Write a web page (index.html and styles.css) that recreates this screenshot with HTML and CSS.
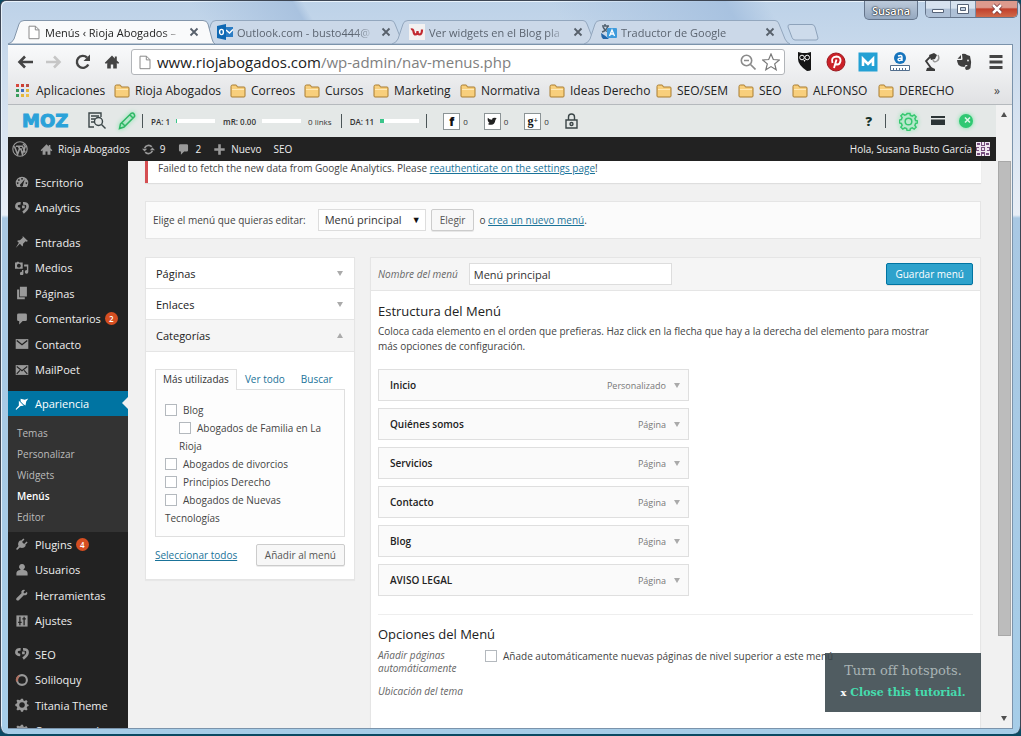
FILE: index.html
```
<!DOCTYPE html>
<html lang="es">
<head>
    <meta charset="UTF-8">
    <meta name="viewport" content="width=device-width, initial-scale=1.0">
    <title>Menús ‹ Rioja Abogados</title>
    <link rel="stylesheet" href="styles.css">
</head>
<body>
    <!-- shared icons -->
    <svg class="sprite" aria-hidden="true">
        <symbol id="doc" viewBox="0 0 12 14"><path d="M1 .7h6.5L11 4.2v9H1zM7.3.7v3.7H11" fill="#fff" stroke="#8a8a8a"/></symbol>
        <symbol id="folder" viewBox="0 0 16 14"><path d="M1 12V2.5Q1 1 2.500 1h3.500Q7 1 7.300 3H14q1 0 1 1v8q0 1-1 1H2q-1 0-1-1z" fill="#f8cf7c" stroke="#a97d31"/><path d="M2 5.500h12" stroke="#fde9b8"/></symbol>
        <symbol id="tab-on" viewBox="0 0 207 24"><path d="M0 24Q4 23 6 19L11 4Q12 .5 16 .5H195Q199 .5 200 4L204 19Q205 23 207 24z" fill="#f9fafb" stroke="#8396ab"/></symbol>
        <symbol id="tab-off" viewBox="0 0 207 24"><path d="M0 24Q4 23 6 19L11 4Q12 .5 16 .5H191Q194 .5 195 4L201 19Q203 23 206 24z" fill="#cbd8e8" stroke="#93a7be"/></symbol>
        <symbol id="home" viewBox="0 0 20 20"><path d="M10 2L1 11l1.500 1.500L4 11v7h4.500v-5h3v5H16v-7l1.500 1.500L19 11l-3-3V3h-2.500v2.500z"/></symbol>
        <symbol id="bubble" viewBox="0 0 20 20"><path d="M5 2h10q2 0 2 2v7q0 2-2 2h-4l-5 5v-5H5q-2 0-2-2V4q0-2 2-2z"/></symbol>
        <symbol id="dash" viewBox="0 0 20 20"><path fill-rule="evenodd" d="M3 17Q1 14.500 1 11.500a9 9 0 0 1 18 0q0 3-2 5.500zM10 4.200a1.200 1.200 0 1 0 .1 0zM5.500 6a1.200 1.200 0 1 0 .1 0zM3.800 10.500a1.200 1.200 0 1 0 .1 0zM16.200 10.500a1.200 1.200 0 1 0 .1 0zM14 6l-5.500 6.500a2.200 2.200 0 1 0 3 1.500z"/></symbol>
        <symbol id="yoast" viewBox="0 0 20 20"><path d="M7.500 11.500Q2 11 2 7.500 2 3 8 3.500M11.500 3.500Q18 3 18 7.500 18 12 11.500 16.500M12 6.500v4" fill="none" stroke="#999" stroke-width="3.800"/></symbol>
        <symbol id="pin" viewBox="0 0 20 20"><path d="M11 1.500l7.500 7-2 1-1.500-.5-3.500 3.500q.5 2.500-1 4L7 12.500l-6 6 4.500-7.500L3 8.500q1.500-1.500 4-1L11 4z"/></symbol>
        <symbol id="media" viewBox="0 0 20 20"><path fill-rule="evenodd" d="M2 2l1-1h2l1 1h5v9H0V2zM5.500 4a2.700 2.700 0 1 0 .1 0zM13 5h6v10.500a2.500 2.500 0 1 1-2-2.400V8h-4zM12 13v5.500a2.500 2.500 0 1 1-2-3V13z"/></symbol>
        <symbol id="pages" viewBox="0 0 20 20"><path d="M7 1h10v14H7zM3 5h3v11h8v3H3z"/></symbol>
        <symbol id="mail" viewBox="0 0 20 20"><path d="M1 3h18v14H1z"/><path d="M2.500 5l7.500 6 7.500-6" fill="none" stroke="#222" stroke-width="2"/></symbol>
        <symbol id="mail-open" viewBox="0 0 20 20"><path d="M1 3h18v14H1z"/><path d="M2.500 5l7.500 6 7.500-6M2.500 15.500L7 10.500M17.500 15.500L13 10.500" fill="none" stroke="#222" stroke-width="1.600"/></symbol>
        <symbol id="brush" viewBox="0 0 20 20"><path d="M8 2.500l6 1.500L19 2l-3 4.500-1 5.500-3-1.500-4-4zM5.500 5.500l7 7-4.500.5L1.500 18.500 1 17l4.500-5z"/></symbol>
        <symbol id="plug" viewBox="0 0 20 20"><path d="M12 2l1.500 1.500L10 7l3 3 3.500-3.500L18 8l-3.500 3.500 1 1Q12 17 7 15L3 18.500 1.500 17 5 13Q3 8 7.500 4.500l1 1z"/></symbol>
        <symbol id="user" viewBox="0 0 20 20"><path d="M10 1.500a4 4 0 0 1 2.500 7.300l-.5 1.200q6 .5 6 4.500V18H2v-3.500Q2 10.500 8 10l-.5-1.200A4 4 0 0 1 10 1.500z"/></symbol>
        <symbol id="wrench" viewBox="0 0 20 20"><path d="M17 5.500l-3 2.500-2-2 2.500-3Q10.500 1.500 9 5l.3 2.500L2 14.500q-1 2 .5 3t3 0l7-7.300 2.500.3q4-1.500 2-5z"/></symbol>
        <symbol id="sliders" viewBox="0 0 20 20"><path d="M2 2h16v16H2z"/><path d="M7 4v12M13 4v12M4.500 12h5M10.500 7h5" stroke="#222" stroke-width="1.800"/></symbol>
        <symbol id="gear" viewBox="0 0 20 20"><path fill-rule="evenodd" d="M8.500 1h3l.5 2.500 1.800.8L16 3l2 2-1.300 2.200.8 1.800 2 .5v2l-2 .8-.8 1.800L18 16l-2 2-2.200-1.300-1.800.8-.5 2h-3L8 17.500l-1.800-.8L4 18l-2-2 1.300-2.200L2.500 12 .5 11.500v-3L2.500 8l.8-1.800L2 4l2-2 2.200 1.300L8 2.500zM10 6a4 4 0 1 0 .1 0z"/></symbol>
        <symbol id="x" viewBox="0 0 10 10"><path d="M1.500 1.500l7 7M8.500 1.500l-7 7" fill="none" stroke="#57606b" stroke-width="1.800"/></symbol>
    </svg>

    <div class="window">
        <header class="tabstrip">
            <nav class="tabs">
                <a class="tab active" href="#">
                    <svg class="tab-shape"><use href="#tab-on"/></svg>
                    <svg class="favicon doc"><use href="#doc"/></svg>
                    <span class="tab-title">Menús ‹ Rioja Abogados –</span>
                    <svg class="tab-close"><use href="#x"/></svg>
                </a>
                <a class="tab" href="#">
                    <svg class="tab-shape"><use href="#tab-off"/></svg>
                    <svg class="favicon" viewBox="0 0 16 16"><path d="M7 3h9v10H7z" fill="#2b7cc4"/><path d="M9 6l3.500 3L16 5.500" stroke="#fff" fill="none" stroke-width="1.500"/><path d="M0 2l9-2v16l-9-2z" fill="#0f68b3"/><ellipse cx="4.500" cy="8" rx="1.900" ry="2.600" fill="none" stroke="#fff" stroke-width="1.400"/></svg>
                    <span class="tab-title">Outlook.com - busto444@</span>
                    <svg class="tab-close"><use href="#x"/></svg>
                </a>
                <a class="tab" href="#">
                    <svg class="tab-shape"><use href="#tab-off"/></svg>
                    <svg class="favicon" viewBox="0 0 16 16"><path d="M0 0h16v16H0z" fill="#f3f1f1"/><path d="M2 5.500Q4 4.500 4.500 7.500t2 3Q8.500 10.500 8.500 7q0 3.500 2 3.500 2.500 0 2.500-5" fill="none" stroke="#c2282f" stroke-width="2.200"/></svg>
                    <span class="tab-title">Ver widgets en el Blog pla</span>
                    <svg class="tab-close"><use href="#x"/></svg>
                </a>
                <a class="tab" href="#">
                    <svg class="tab-shape"><use href="#tab-off"/></svg>
                    <svg class="favicon" viewBox="0 0 16 16"><path d="M1 2h7M4 0v2M7 2Q5 7 1 8M2 3q2 4 6 5" fill="none" stroke="#51606e" stroke-width="1.500"/><path d="M0 9q5 3 8 6H2q-2-2-2-6z" fill="#2465a8"/><rect x="6" y="4" width="10" height="10" rx="1" fill="#3e9bdc"/><path d="M8.500 12L11 6l2.500 6M9.500 10h3" fill="none" stroke="#fff" stroke-width="1.300"/></svg>
                    <span class="tab-title">Traductor de Google</span>
                    <svg class="tab-close"><use href="#x"/></svg>
                </a>
            </nav>
            <button class="new-tab" aria-label="Nueva pestaña"><svg viewBox="0 0 32 17"><path d="M3 .5h22q2 0 3 2.500l3 11q0 2-2 2H8q-2 0-3-2.500L1 3Q.5.5 3 .5z" fill="#cddbeb" stroke="#8ea3bb"/></svg></button>
            <div class="win-controls">
                <button class="win-user">Susana</button>
                <div class="win-group">
                    <button class="win-min" aria-label="Minimizar"><svg viewBox="0 0 12 12"><path d="M.5 6.500h11v3H.5z" fill="#fff" stroke="#566378"/></svg></button>
                    <button class="win-max" aria-label="Maximizar"><svg viewBox="0 0 12 12"><path d="M.5 1.500h11v9H.5z" fill="#fff" stroke="#566378"/><path d="M3.500 4.500h5v3h-5z" fill="#c4d1e2" stroke="#566378"/></svg></button>
                    <button class="win-close" aria-label="Cerrar"><svg viewBox="0 0 12 12"><path d="M2 2l8 8M10 2l-8 8" stroke="#743033" stroke-width="4"/><path d="M2 2l8 8M10 2l-8 8" stroke="#fff" stroke-width="2.500"/></svg></button>
                </div>
            </div>
        </header>

        <div class="browser">
            <div class="toolbar">
                <button aria-label="Atrás"><svg viewBox="0 0 16 16"><path d="M8 2.500L2.500 8 8 13.500M3 8h13" fill="none" stroke="#444" stroke-width="2.600"/></svg></button>
                <button aria-label="Adelante"><svg viewBox="0 0 16 16"><path d="M8 2.500L13.500 8 8 13.500M13 8H0" fill="none" stroke="#c6c6c6" stroke-width="2.600"/></svg></button>
                <button aria-label="Recargar"><svg viewBox="0 0 16 16"><path d="M13.300 10.500a6 6 0 1 1-1.300-7" fill="none" stroke="#444" stroke-width="2.400"/><path d="M15 .5V7H8.500z" fill="#444"/></svg></button>
                <button aria-label="Inicio"><svg viewBox="0 0 20 20" fill="#444"><use href="#home"/></svg></button>
                <div class="omnibox">
                    <svg class="doc"><use href="#doc"/></svg>
                    <a class="url" href="#">www.riojabogados.com<span>/wp-admin/nav-menus.php</span></a>
                    <svg class="omni-icon" viewBox="0 0 16 16" fill="none" stroke="#8b8b8b" stroke-width="1.600"><circle cx="6.500" cy="6.500" r="5.200"/><path d="M4 6.500h5M10.500 10.500l5 5"/></svg>
                    <svg class="omni-icon star" viewBox="0 0 18 18"><path d="M9 1l2.300 5.500 6 .5-4.600 3.900 1.500 5.900L9 13.600l-5.200 3.200 1.500-5.900L.7 7l6-.5z" fill="none" stroke="#777" stroke-width="1.200"/></svg>
                </div>
                <div class="extensions">
                    <button aria-label="Hootsuite"><svg viewBox="0 0 20 20"><path d="M4 0l4 1h5l4-1v18q-1 1-4 1-9-6-9-12z" fill="#151515"/><circle cx="8" cy="5.500" r="2.300" fill="none" stroke="#fff"/><circle cx="13.200" cy="5.500" r="2.300" fill="none" stroke="#fff"/><path d="M9.500 8h2l-1 2z" fill="#fff"/></svg></button>
                    <button aria-label="Pinterest"><svg viewBox="0 0 20 20"><circle cx="10" cy="10" r="9" fill="#cb2027" stroke="#9b1a20"/><path d="M6.500 11q-2-6 4-6.500 4.500.3 4 4.500-.8 3.500-3 3.500-1.500 0-2-1M10.500 7.500L8 16" fill="none" stroke="#fff" stroke-width="1.900"/></svg></button>
                    <button aria-label="MozBar"><svg viewBox="0 0 20 20"><path d="M.5.500h19v19H.500z" fill="#23a0d4"/><path d="M5 14V7l5 5 5-5v7" fill="none" stroke="#fff" stroke-width="2.600"/></svg></button>
                    <button aria-label="Alexa"><svg viewBox="0 0 20 20"><circle cx="10" cy="6" r="6" fill="#1674bd"/><path d="M8 4q4-1.500 4 1v4M12 6.300q-4-.5-4 1.500 1.500 2 4-.5" fill="none" stroke="#fff" stroke-width="1.400"/><path d="M.5 13.500h19v5H.500z" fill="#fff" stroke="#526e8d"/><path d="M3.500 16v3M6.500 16v3M9.500 16v3M12.500 16v3M15.500 16v3" stroke="#526e8d"/></svg></button>
                    <button aria-label="Lámpara"><svg viewBox="0 0 20 20"><path d="M7 3l5-2 3 2-2 4-4 1zM4 19l1-3 4-1 4 2v2z" fill="#3b3b3b"/><path d="M9 4L4 9l5 7" fill="none" stroke="#3b3b3b" stroke-width="1.800"/><path d="M11 8q1 3 4 1t1-6" fill="none" stroke="#999" stroke-width="1.500"/></svg></button>
                    <button aria-label="Evernote"><svg viewBox="0 0 20 20"><path d="M8 2q3-1 5 1l3 1q2 6 .5 12-1 2-4 2-2-1-1-3.500l2-.5q0-1.500-2-1l-1 2q-4 0-6-2Q3 10 3 8h4.500q1 0 1-1zM7 3L3.500 6.700H7z" fill="#3e3e3e"/><circle cx="14" cy="8.500" r="1" fill="#ddd"/></svg></button>
                    <button aria-label="Menú"><svg viewBox="0 0 20 20"><path d="M3.500 4.500h13M3.500 10h13M3.500 15.500h13" stroke="#444" stroke-width="2.800"/></svg></button>
                </div>
            </div>

            <nav class="bookmarks">
                <a href="#"><svg class="apps" viewBox="0 0 14 14"><path d="M0 0h3v3H0z" fill="#d8473c"/><path d="M5 0h3v3H5z" fill="#cf3d32"/><path d="M10 0h3v3h-3z" fill="#b94f46"/><path d="M0 5h3v3H0z" fill="#35955a"/><path d="M5 5h3v3H5z" fill="#4070c0"/><path d="M10 5h3v3h-3z" fill="#e4b73a"/><path d="M0 10h3v3H0z" fill="#3a9e5d"/><path d="M5 10h3v3H5z" fill="#e4b73a"/><path d="M10 10h3v3h-3z" fill="#edc049"/></svg>Aplicaciones</a>
                <a href="#"><svg><use href="#folder"/></svg>Rioja Abogados</a>
                <a href="#"><svg><use href="#folder"/></svg>Correos</a>
                <a href="#"><svg><use href="#folder"/></svg>Cursos</a>
                <a href="#"><svg><use href="#folder"/></svg>Marketing</a>
                <a href="#"><svg><use href="#folder"/></svg>Normativa</a>
                <a href="#"><svg><use href="#folder"/></svg>Ideas Derecho</a>
                <a href="#"><svg><use href="#folder"/></svg>SEO/SEM</a>
                <a href="#"><svg><use href="#folder"/></svg>SEO</a>
                <a href="#"><svg><use href="#folder"/></svg>ALFONSO</a>
                <a href="#"><svg><use href="#folder"/></svg>DERECHO</a>
                <button class="more">»</button>
            </nav>

            <div class="viewport">
                <div class="page">
                    <div class="mozbar">
                        <a class="moz-logo" href="#">MOZ</a>
                        <svg class="moz-analyze" viewBox="0 0 18 18" fill="none" stroke="#3b4648" stroke-width="1.400"><path d="M6 15H1V1h12v4M3 4h8M3 7h4M3 10h3"/><circle cx="10.500" cy="9.500" r="4"/><path d="M13.500 12.500l4 4"/></svg>
                        <svg class="moz-pencil" viewBox="0 0 18 18" fill="none" stroke="#2fb765" stroke-width="1.500"><path d="M1.500 16.500l1-4.500L13 1.500q2-1 3 .5t.5 2.500L6 15zM4 11l3 3M12 3l3 3"/></svg>
                        <i class="bar"></i>
                        <div class="metric"><b>PA: 1</b><meter min="0" max="100" value="1"></meter></div>
                        <div class="metric"><b>mR: 0.00</b><meter min="0" max="10" value="0"></meter></div>
                        <span class="links">0 links</span>
                        <i class="bar"></i>
                        <div class="metric"><b>DA: 11</b><meter min="0" max="100" value="11"></meter></div>
                        <i class="bar"></i>
                        <div class="social">
                            <span class="count"><b class="box">f</b>0</span>
                            <span class="count"><b class="box"><svg viewBox="0 0 12 12"><path d="M1 2q2 2.500 5 2.500Q6 2 8.500 2L11.500 2.500 10 5q-.5 5-5 5.500Q2.500 10.500 1 9.500L3 8.500Q0 6 1 2z" fill="#222"/></svg></b>0</span>
                            <span class="count"><b class="box serif">g<sup>+</sup></b>0</span>
                            <svg class="lock" viewBox="0 0 13 16" fill="none" stroke="#3b4648" stroke-width="1.400"><path d="M1 7h11v8H1zM3.500 7V4q0-3 3-3t3 3v3"/><circle cx="6.500" cy="11" r="1.500"/></svg>
                        </div>
                        <div class="moz-tools">
                            <b>?</b>
                            <i class="bar"></i>
                            <svg class="glow" viewBox="0 0 20 20"><g fill="none" stroke="#37c871" stroke-width="1.600"><path d="M8.500 1.500h3l.5 2 2 .8L16 3l2 2-1.300 2 .8 2 2 .5v2l-2 .5-.8 2L18 16l-2 2-2-1.300-2 .8-.5 2h-3L8 17.500l-2-.8L4 18l-2-2 1.300-2-.8-2-2-.5v-3l2-.5.8-2L2 4l2-2 2 1.300 2-.8z"/><circle cx="10" cy="10" r="3.500"/></g></svg>
                            <svg class="cards" viewBox="0 0 14 10"><path d="M0 0h14v2H0zM0 3.500h14V9H0z" fill="#2c3436"/></svg>
                            <svg class="glow small" viewBox="0 0 16 16"><circle cx="8" cy="8" r="7" fill="#2fc872"/><path d="M7 4.500l5 5M12 4.500l-5 5" stroke="#dff7e8" stroke-width="1.600"/></svg>
                        </div>
                    </div>

                    <nav class="adminbar">
                        <a class="ab-logo" href="#"><svg viewBox="0 0 20 20"><circle cx="10" cy="10" r="9" fill="none" stroke="#999" stroke-width="1.400"/><path d="M3 6.500l4 10 2.500-7L8 6.500h5l3.500 8M5 6.500h3M11 9l2 7.500L16.500 7q-1-3-3-3" fill="none" stroke="#999" stroke-width="2"/></svg></a>
                        <a class="ab-site" href="#"><svg><use href="#home"/></svg>Rioja Abogados</a>
                        <a href="#"><svg viewBox="0 0 20 20"><path d="M4 8a6.500 6.500 0 0 1 11-2M16 12a6.500 6.500 0 0 1-11 2" fill="none" stroke="#999" stroke-width="2.600"/><path d="M0 9h8L4 13zM12 11h8l-4-4z"/></svg>9</a>
                        <a href="#"><svg><use href="#bubble"/></svg>2</a>
                        <a href="#"><svg viewBox="0 0 20 20"><path d="M8 2h4v6h6v4h-6v6H8v-6H2V8h6z"/></svg>Nuevo</a>
                        <a href="#">SEO</a>
                        <a class="ab-user" href="#">Hola, Susana Busto García
                            <svg class="avatar" viewBox="0 0 14 14"><path d="M0 0h14v14H0z" fill="#efe6f0"/><path d="M1 1h3v2H1zM10 1h3v2h-3zM1 11h3v2H1zM10 11h3v2h-3zM5 0h1v3h2V0h1v4H5zM5 10h4v4H8v-2H6v2H5zM0 5h3v1H1v2h2v1H0zM14 5h-3v1h2v2h-2v1h3zM5 5h4v4H5z" fill="#77507f"/><path d="M6 6h2v2H6z" fill="#efe6f0"/></svg>
                        </a>
                    </nav>

                    <div class="admin">
                        <nav class="sidebar">
                            <ul>
                                <li><a href="#"><svg><use href="#dash"/></svg>Escritorio</a></li>
                                <li><a href="#"><svg><use href="#yoast"/></svg>Analytics</a></li>
                            </ul>
                            <ul>
                                <li><a href="#"><svg><use href="#pin"/></svg>Entradas</a></li>
                                <li><a href="#"><svg><use href="#media"/></svg>Medios</a></li>
                                <li><a href="#"><svg><use href="#pages"/></svg>Páginas</a></li>
                                <li><a href="#"><svg><use href="#bubble"/></svg>Comentarios <span class="badge">2</span></a></li>
                                <li><a href="#"><svg><use href="#mail"/></svg>Contacto</a></li>
                                <li><a href="#"><svg><use href="#mail-open"/></svg>MailPoet</a></li>
                            </ul>
                            <a class="current" href="#"><svg><use href="#brush"/></svg>Apariencia</a>
                            <div class="submenu">
                                <a href="#">Temas</a>
                                <a href="#">Personalizar</a>
                                <a href="#">Widgets</a>
                                <a class="here" href="#">Menús</a>
                                <a href="#">Editor</a>
                            </div>
                            <ul>
                                <li><a href="#"><svg><use href="#plug"/></svg>Plugins <span class="badge">4</span></a></li>
                                <li><a href="#"><svg><use href="#user"/></svg>Usuarios</a></li>
                                <li><a href="#"><svg><use href="#wrench"/></svg>Herramientas</a></li>
                                <li><a href="#"><svg><use href="#sliders"/></svg>Ajustes</a></li>
                            </ul>
                            <ul>
                                <li><a href="#"><svg><use href="#yoast"/></svg>SEO</a></li>
                                <li><a href="#"><svg viewBox="0 0 20 20"><circle cx="10" cy="10" r="7" fill="none" stroke="#999" stroke-width="3"/><path d="M3 12a7 7 0 0 1 3-8" fill="none" stroke="#b0705f" stroke-width="3"/></svg>Soliloquy</a></li>
                                <li><a href="#"><svg><use href="#gear"/></svg>Titania Theme</a></li>
                                <li><a href="#"><svg><use href="#gear"/></svg>Cerrar menú</a></li>
                            </ul>
                        </nav>

                        <main class="content">
                            <p class="notice">Failed to fetch the new data from Google Analytics. Please <a href="#">reauthenticate on the settings page</a>!</p>

                            <form class="manage">
                                <label for="menuSelect">Elige el menú que quieras editar:</label>
                                <span class="select">
                                    <select id="menuSelect"><option>Menú principal</option></select>
                                </span>
                                <button type="button" class="button">Elegir</button>
                                <span>o <a href="#">crea un nuevo menú</a>.</span>
                            </form>

                            <div class="columns">
                                <section class="accordion">
                                    <h3>Páginas <i class="down"></i></h3>
                                    <h3>Enlaces <i class="down"></i></h3>
                                    <h3 class="open">Categorías <i class="up"></i></h3>
                                    <div class="panel">
                                        <div class="panel-tabs">
                                            <a class="on" href="#">Más utilizadas</a>
                                            <a href="#">Ver todo</a>
                                            <a href="#">Buscar</a>
                                        </div>
                                        <div class="checklist">
                                            <label><input type="checkbox">Blog</label>
                                            <label class="child"><input type="checkbox">Abogados de Familia en La Rioja</label>
                                            <label><input type="checkbox">Abogados de divorcios</label>
                                            <label><input type="checkbox">Principios Derecho</label>
                                            <label><input type="checkbox">Abogados de Nuevas Tecnologías</label>
                                        </div>
                                        <div class="panel-actions">
                                            <a href="#">Seleccionar todos</a>
                                            <button class="button">Añadir al menú</button>
                                        </div>
                                    </div>
                                </section>

                                <section class="editor">
                                    <div class="editor-head">
                                        <label for="menuName">Nombre del menú</label>
                                        <input type="text" id="menuName" value="Menú principal">
                                        <button class="button primary">Guardar menú</button>
                                    </div>
                                    <div class="editor-body">
                                        <h2>Estructura del Menú</h2>
                                        <p>Coloca cada elemento en el orden que prefieras. Haz click en la flecha que hay a la derecha del elemento para mostrar<br>más opciones de configuración.</p>
                                        <ul class="items">
                                            <li><b>Inicio</b><span>Personalizado</span><i class="down"></i></li>
                                            <li><b>Quiénes somos</b><span>Página</span><i class="down"></i></li>
                                            <li><b>Servicios</b><span>Página</span><i class="down"></i></li>
                                            <li><b>Contacto</b><span>Página</span><i class="down"></i></li>
                                            <li><b>Blog</b><span>Página</span><i class="down"></i></li>
                                            <li><b>AVISO LEGAL</b><span>Página</span><i class="down"></i></li>
                                        </ul>
                                        <div class="options">
                                            <h2>Opciones del Menú</h2>
                                            <dl>
                                                <dt>Añadir páginas automáticamente</dt>
                                                <dd><label><input type="checkbox">Añade automáticamente nuevas páginas de nivel superior a este menú</label></dd>
                                                <dt>Ubicación del tema</dt>
                                                <dd></dd>
                                            </dl>
                                        </div>
                                    </div>
                                </section>
                            </div>
                        </main>
                    </div>

                    <aside class="hotspots">
                        <p>Turn off hotspots.</p>
                        <a href="#"><span>x</span> Close this tutorial.</a>
                    </aside>
                </div>
                <div class="scrollbar"><i class="up"></i><div class="track"><div class="thumb"></div></div><i class="down"></i></div>
            </div>
        </div>
    </div>
</body>
</html>
```

FILE: styles.css
```
* { box-sizing: border-box; }
html, body { height: 100%; }
body { margin: 0; overflow: hidden; background: #0b4a63; font: 10px/15px "Open Sans", "Noto Sans", sans-serif; color: #444; }
button { font: inherit; color: inherit; border: 0; padding: 0; background: none; }
h2, h3, p, ul, dl, dd { margin: 0; padding: 0; }
ul { list-style: none; }
svg { display: block; flex: none; }
a { color: #1a7399; }
.sprite { position: absolute; width: 0; height: 0; }
i.up, i.down { flex: none; border: 3px solid transparent; }
i.down { border-top: 5px solid #aaa; border-bottom: 0; }
i.up { border-bottom: 5px solid #aaa; border-top: 0; }

/* window frame */
.window { height: calc(100% - 2px); display: flex; flex-direction: column; padding: 0 7px 5px 7px; border: 1px solid #3d4654; border-bottom: 0; border-radius: 6px 6px 8px 8px; background: linear-gradient(to bottom, #bdd2e8 0, #d3e0ef 100px, #e8eef6 214px, #a9c8e3 217px, #a6cde8 100%); box-shadow: inset 1px 1px #e8f2fb; }
.tabstrip { height: 43px; display: flex; align-items: flex-end; position: relative; background: linear-gradient(60deg, transparent 20%, #a9c2df 30%, transparent 31%, transparent 55%, #a8c2e0 72%, transparent 76%); }
.tabs { display: flex; }
.tab { position: relative; width: 207px; height: 24px; margin-right: -15px; padding: 0 15px 0 17px; display: flex; align-items: center; color: #5b6470; font-size: 11px; text-decoration: none; }
.tab.active { z-index: 1; color: #222; }
.tab-shape { position: absolute; left: 0; top: 0; width: 100%; height: 100%; }
.favicon { position: relative; width: 16px; height: 16px; margin-right: 4px; }
.tab-title { position: relative; flex: 1; overflow: hidden; white-space: nowrap; -webkit-mask-image: linear-gradient(to right, #000 85%, transparent); mask-image: linear-gradient(to right, #000 85%, transparent); }
.tab-close { position: relative; width: 10px; height: 10px; margin: 0 1px 0 6px; }
.new-tab { width: 32px; height: 17px; margin: 0 0 3px 11px; }
.new-tab svg { width: 32px; height: 17px; }
.win-controls { position: absolute; top: 0; right: -5px; display: flex; align-items: flex-start; gap: 7px; }
.win-user { width: 54px; height: 19px; border: 1px solid #65758b; border-top: 0; border-radius: 0 0 5px 5px; background: linear-gradient(#bccadb, #95a8c0); color: #fff; font-size: 11px; font-weight: 600; text-shadow: 0 0 2px #000, 0 0 1px #000; }
.win-group { display: flex; border: 1px solid #65758b; border-top: 0; border-radius: 0 0 5px 5px; overflow: hidden; }
.win-group button { width: 25px; height: 16px; display: flex; align-items: center; justify-content: center; background: linear-gradient(#d7e2ef 45%, #aec0d6 50%); border-right: 1px solid #7b8ca3; }
.win-group svg { width: 12px; height: 12px; }
.win-group .win-close { width: 41px; border: 0; background: linear-gradient(#dd9a8d 40%, #c1402c 50%, #d06a4a); }

/* browser chrome */
.browser { flex: 1; min-height: 0; display: flex; flex-direction: column; border: 1px solid #7b93ab; border-left: 0; background: linear-gradient(#f9fafb, #e0e1e3 60px); }
.toolbar { flex: none; height: 34px; display: flex; align-items: center; padding-left: 9px; }
.toolbar button { width: 16px; margin-right: 13px; }
.toolbar button svg { width: 16px; height: 16px; }
.omnibox { flex: 1; height: 26px; margin-left: -2px; display: flex; align-items: center; gap: 6px; padding: 0 4px 0 7px; border: 1px solid #b2b5b9; border-radius: 3px; background: #fff; }
.doc { width: 12px; height: 15px; }
.tab .doc { margin: 0 5px 0 3px; }
.url { flex: 1; font-size: 15px; line-height: 22px; color: #222; text-decoration: none; }
.url span { color: #808080; }
.omni-icon { width: 16px; height: 16px; }
.star { width: 18px; height: 18px; }
.toolbar .extensions { display: flex; gap: 12px; margin: 0 6px 0 9px; }
.toolbar .extensions button { width: 20px; margin: 0; }
.toolbar .extensions svg { width: 20px; height: 20px; }
.bookmarks { flex: none; height: 26px; display: grid; grid-template-columns: 99px 116px 74px 69px 87px 89px 107px 82px 54px 86px 1fr auto; align-items: center; padding: 0 12px 2px 7px; font-size: 12px; border-bottom: 1px solid #b5b9bd; }
.bookmarks a { display: flex; align-items: center; gap: 5px; color: #222; text-decoration: none; white-space: nowrap; }
.bookmarks svg { width: 16px; height: 14px; }
.viewport { flex: 1; min-height: 0; display: flex; }
.page { flex: 1; min-width: 0; display: flex; flex-direction: column; position: relative; background: #f1f1f1; overflow: hidden; }
.scrollbar { flex: none; width: 16px; display: flex; flex-direction: column; align-items: center; padding: 7px 0; background: #f1f1f1; }
.scrollbar .up { border-bottom-color: #505050; }
.scrollbar .down { border-top-color: #505050; }
.track { flex: 1; width: 100%; padding: 44px 1px 80px 2px; }
.thumb { height: 100%; background: #bcbcbc; border: 1px solid #a8a8a8; }

/* moz toolbar */
.mozbar { flex: none; height: 32px; display: flex; align-items: center; padding: 0 22px 0 14px; background: #e4e8e7; font-size: 8px; color: #333; white-space: nowrap; }
.moz-logo { width: 66px; font: bold 18px/20px "DejaVu Sans", sans-serif; -webkit-text-stroke: 1px #2ba2d9; color: #2ba2d9; text-decoration: none; }
.moz-analyze { width: 18px; height: 18px; }
.moz-pencil { width: 18px; height: 18px; margin: 0 6px 0 12px; filter: drop-shadow(0 0 2px #5fe596); }
.bar { width: 1px; height: 14px; background: #4b5557; }
.metric { display: flex; align-items: center; gap: 6px; margin: 0 0 0 8px; }
.metric b { font-weight: 600; }
meter { width: 39px; height: 4px; appearance: none; background: #fff; border: 0; }
meter::-webkit-meter-bar { height: 4px; background: #fff; border: 0; border-radius: 0; }
meter::-webkit-meter-optimum-value { background: #3ac58a; }
.links { margin: 0 9px 0 7px; }
.metric + .bar { margin-left: 7px; }
.social { display: flex; align-items: center; margin-left: 16px; gap: 16px; }
.count { display: flex; align-items: center; gap: 3px; }
.box { width: 17px; height: 17px; display: flex; align-items: center; justify-content: center; border: 1px solid #8c9496; background: #fff; font-size: 12px; font-weight: 800; color: #111; }
.box svg { width: 10px; height: 10px; }
.serif { font-family: "Liberation Serif", serif; font-weight: 700; }
.serif sup { font-size: 8px; line-height: 8px; }
.lock { width: 13px; height: 16px; }
.moz-tools { margin-left: auto; display: flex; align-items: center; gap: 13px; }
.moz-tools b { font-size: 13px; font-weight: 800; color: #17332b; }
.glow { width: 19px; height: 19px; filter: drop-shadow(0 0 2px #6be79d); }
.glow.small { width: 16px; height: 16px; }
.cards { width: 14px; height: 10px; }

/* admin bar */
.adminbar { flex: none; height: 24px; display: flex; align-items: center; gap: 12px; padding: 0 6px 0 4px; background: #222; font-size: 10px; fill: #999; }
.adminbar a { display: flex; align-items: center; gap: 5px; color: #eee; text-decoration: none; white-space: nowrap; }
.adminbar svg { width: 13px; height: 13px; }
.adminbar .ab-logo svg { width: 16px; height: 16px; }
.adminbar .ab-user { margin-left: auto; gap: 4px; }
.adminbar .avatar { width: 14px; height: 14px; }

/* sidebar */
.admin { flex: 1; min-height: 0; display: flex; }
.sidebar { flex: none; width: 120px; padding-top: 9px; background: #222; fill: #999; font-size: 11px; }
.sidebar ul { display: grid; grid-auto-rows: 26px 25px; }
.sidebar ul + ul { margin-top: 8px; }
.sidebar ul:first-child + ul { margin-top: 9px; }
.sidebar a { height: 100%; display: flex; align-items: center; padding-left: 7px; color: #eee; text-decoration: none; white-space: nowrap; }
.sidebar li a { padding-bottom: 2px; }
.sidebar svg { width: 14px; height: 14px; margin-right: 6px; }
.badge { min-width: 13px; height: 13px; margin-left: 4px; border-radius: 7px; background: #d54e21; color: #fff; font-size: 8px; font-weight: 600; line-height: 13px; text-align: center; }
.sidebar .current { position: relative; height: 25px; margin-top: 8px; background: #0074a2; color: #fff; fill: #fff; }
.current::after { content: ""; position: absolute; right: 0; top: 6px; border: 6px solid transparent; border-right-color: #f1f1f1; border-left: 0; }
.submenu { padding: 7px 0 4px; background: #333; font-size: 10px; }
.sidebar .submenu a { height: 21px; padding-left: 9px; color: #bbb; }
.sidebar .submenu .here { color: #fff; font-weight: 600; }

/* content */
.content { flex: 1; min-width: 0; padding: 0 15px 0 17px; }
.notice { padding: 0 10px 7px; border-left: 3px solid #d54e52; background: #fff; box-shadow: 0 1px 1px rgba(0,0,0,.08); }
.manage { display: flex; align-items: center; gap: 5px; margin-top: 18px; padding: 7px; height: 38px; border: 1px solid #e5e5e5; background: #fbfbfb; }
.manage label { margin-right: 7px; }
.select { position: relative; }
.select::after { content: "▼"; position: absolute; right: 5px; top: 3px; font-size: 9px; color: #111; pointer-events: none; }
select { display: block; width: 108px; height: 22px; appearance: none; padding: 0 6px; border: 1px solid #ddd; border-radius: 0; background: #fff; font: 11px/20px "Open Sans", sans-serif; color: #333; }
.button { height: 22px; padding: 0 8px; border: 1px solid #ccc; border-radius: 2px; background: #f7f7f7; color: #555; box-shadow: 0 1px 0 rgba(0,0,0,.08); }
.button.primary { background: #2ea2cc; border-color: #0074a2; color: #fff; }
.columns { display: grid; grid-template-columns: 210px 1fr; align-items: start; gap: 15px; margin-top: 18px; }
.accordion, .editor { border: 1px solid #e5e5e5; background: #fff; box-shadow: 0 1px 1px rgba(0,0,0,.04); }
.accordion h3 { height: 31px; display: flex; align-items: center; justify-content: space-between; padding: 0 11px 0 10px; border-bottom: 1px solid #e5e5e5; font-size: 11px; font-weight: 400; color: #222; }
.accordion .open { height: 32px; background: #f5f5f5; }
.panel { padding: 17px 9px 13px; }
.panel-tabs { display: flex; align-items: flex-end; }
.panel-tabs a { padding: 2px 7px; border: 1px solid transparent; border-bottom: 0; text-decoration: none; }
.panel-tabs .on { position: relative; margin-bottom: -1px; padding-bottom: 3px; border-color: #dfdfdf; background: #fdfdfd; color: #333; }
.checklist { padding: 11px 9px 9px; border: 1px solid #dfdfdf; background: #fdfdfd; line-height: 18px; }
.checklist label { display: block; }
.checklist .child { margin-left: 14px; }
input[type=checkbox] { appearance: none; width: 12px; height: 12px; margin: 0 6px 0 0; border: 1px solid #b4b9be; background: #fff; vertical-align: -2px; }
.panel-actions { display: flex; align-items: center; justify-content: space-between; margin-top: 7px; }
.editor-head { display: flex; align-items: center; gap: 11px; height: 33px; padding: 0 7px; border-bottom: 1px solid #e5e5e5; background: #f5f5f5; }
.editor-head label, dt { font-style: italic; color: #666; }
.editor-head input { width: 203px; height: 22px; padding: 0 4px; border: 1px solid #ddd; font: 11px "Open Sans", sans-serif; color: #333; }
.editor-head .button { margin-left: auto; }
.editor-body { padding: 10px 7px 30px; }
h2 { font-size: 13px; font-weight: 400; line-height: 20px; color: #222; }
.editor-body p { margin: 3px 0 15px; }
.items { display: grid; gap: 7px; width: 311px; }
.items li { display: flex; align-items: center; height: 32px; padding: 0 8px 0 11px; border: 1px solid #dfdfdf; background: #fafafa; }
.items b { flex: 1; font-weight: 600; color: #222; }
.items span { margin-right: 8px; font-size: 9px; color: #777; }
.options { margin-top: 18px; padding-top: 9px; border-top: 1px solid #eee; }
dl { display: grid; grid-template-columns: 99px 1fr; gap: 10px 8px; margin-top: 5px; }
dt { line-height: 13px; }
dd { white-space: nowrap; }

/* hotspot box */
.hotspots { position: absolute; right: 15px; bottom: 16px; width: 156px; height: 59px; padding: 10px 0; background: rgba(56,70,75,.88); font-family: "DejaVu Serif", serif; font-size: 13px; text-align: center; color: #a9b4b5; white-space: nowrap; }
.hotspots a { display: block; margin-top: 7px; font-size: 11px; font-weight: bold; color: #46dcae; text-decoration: none; }
.hotspots span { font-size: 10px; color: #fff; }
```
